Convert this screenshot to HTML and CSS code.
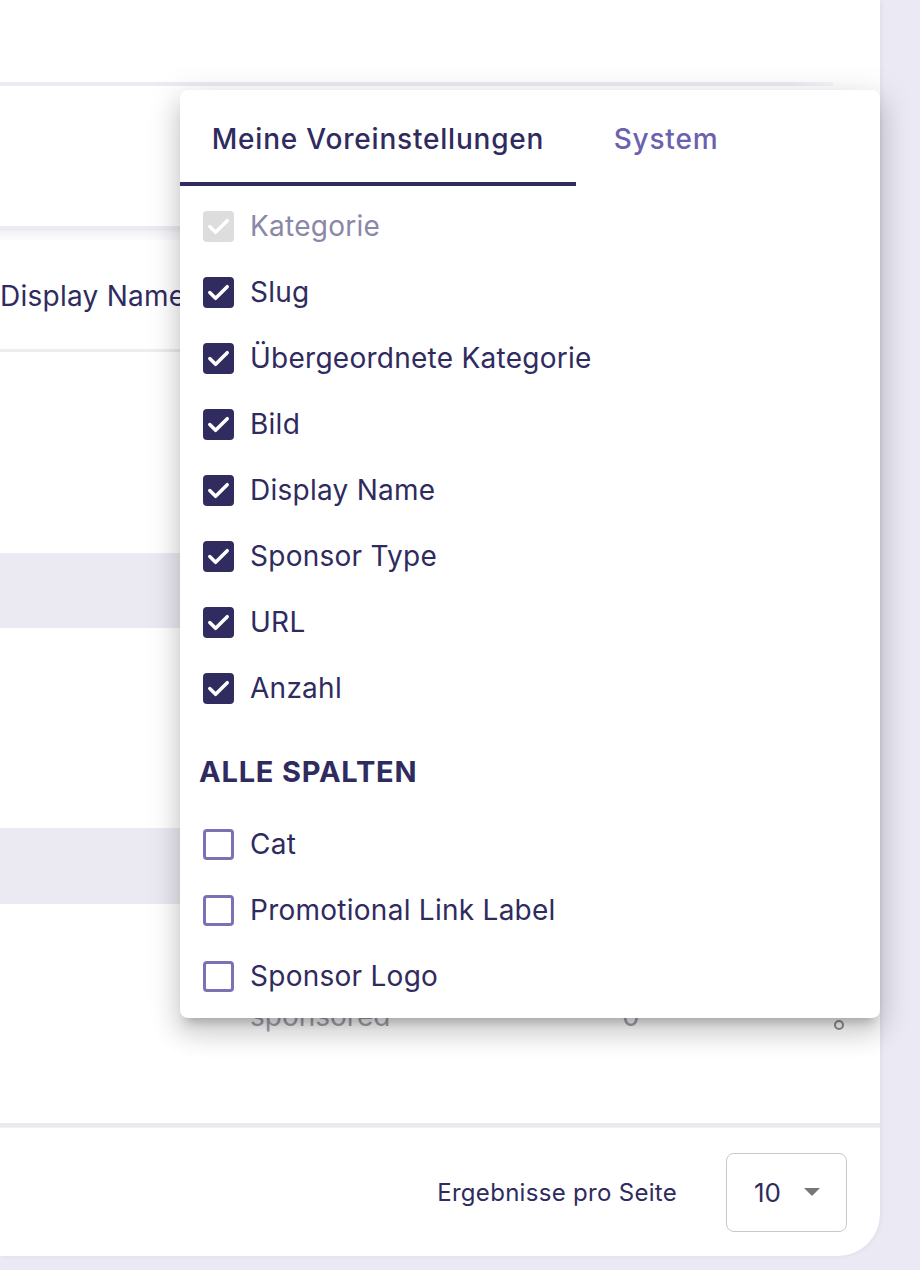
FILE: index.html
```html
<!DOCTYPE html>
<html lang="de">
<head>
<meta charset="utf-8">
<title>Spalten</title>
<link rel="stylesheet" href="styles.css">
</head>
<body>
<div class="card">
  <div class="toolbar"></div>
  <div class="toolbar-line"></div>
  <div class="filters"></div>
  <div class="table">
    <div class="thead-top"></div>
    <div class="thead"><span class="th">Display Name</span></div>
    <div class="row row-tall"></div>
    <div class="row row-short stripe"></div>
    <div class="row row-tall2"></div>
    <div class="row row-short2 stripe"></div>
    <div class="row row-last">
      <span class="cell-sponsored">sponsored</span>
      <span class="cell-count">0</span>
      <span class="cell-icon"></span>
    </div>
  </div>
  <div class="table-sep"></div>
  <div class="footer">
    <span class="per-page">Ergebnisse pro Seite</span>
    <div class="select">
      <span class="select-value">10</span>
      <span class="select-arrow"></span>
    </div>
  </div>

  <div class="menu">
    <div class="tabs">
      <div class="tab tab-active">Meine Voreinstellungen</div>
      <div class="tab tab-idle">System</div>
    </div>
    <ul class="list">
      <li class="item item-disabled"><span class="cb cb-disabled"><svg viewBox="0 0 32 32"><polyline points="7,16 13,22 25,10"/></svg></span>Kategorie</li>
      <li class="item"><span class="cb cb-on"><svg viewBox="0 0 32 32"><polyline points="7,16 13,22 25,10"/></svg></span>Slug</li>
      <li class="item"><span class="cb cb-on"><svg viewBox="0 0 32 32"><polyline points="7,16 13,22 25,10"/></svg></span>Übergeordnete Kategorie</li>
      <li class="item"><span class="cb cb-on"><svg viewBox="0 0 32 32"><polyline points="7,16 13,22 25,10"/></svg></span>Bild</li>
      <li class="item"><span class="cb cb-on"><svg viewBox="0 0 32 32"><polyline points="7,16 13,22 25,10"/></svg></span>Display Name</li>
      <li class="item"><span class="cb cb-on"><svg viewBox="0 0 32 32"><polyline points="7,16 13,22 25,10"/></svg></span>Sponsor Type</li>
      <li class="item"><span class="cb cb-on"><svg viewBox="0 0 32 32"><polyline points="7,16 13,22 25,10"/></svg></span>URL</li>
      <li class="item"><span class="cb cb-on"><svg viewBox="0 0 32 32"><polyline points="7,16 13,22 25,10"/></svg></span>Anzahl</li>
    </ul>
    <div class="heading">ALLE SPALTEN</div>
    <ul class="list list-all">
      <li class="item"><span class="cb cb-off"></span>Cat</li>
      <li class="item"><span class="cb cb-off"></span>Promotional Link Label</li>
      <li class="item"><span class="cb cb-off"></span>Sponsor Logo</li>
    </ul>
  </div>
</div>
</body>
</html>
```
FILE: styles.css
```css
* { box-sizing: border-box; }
html, body {
  margin: 0;
  padding: 0;
}
body {
  width: 920px;
  height: 1270px;
  overflow: hidden;
  background: #ebeaf4;
  font-family: Inter, "Noto Sans", sans-serif;
  color: #2f2b5e;
}
.card {
  position: relative;
  width: 880px;
  height: 1256px;
  background: #ffffff;
  border-bottom-right-radius: 42px;
  box-shadow: 1px 0 4px rgba(60, 60, 90, 0.08);
  display: flex;
  flex-direction: column;
}
.toolbar { height: 82px; }
.toolbar-line {
  height: 4px;
  width: 833px;
  background: linear-gradient(to right, #ebebf3 95%, #f6f6fa);
}
.filters { height: 140px; }
.table { display: flex; flex-direction: column; }
.thead-top {
  height: 14px;
  background: linear-gradient(to bottom, #ebebf3 0, #ebebf3 4px, #f4f4f8 6px, #fbfbfd 14px);
}
.thead {
  height: 112px;
  border-bottom: 3px solid #ececf1;
  display: flex;
  align-items: center;
  padding-top: 2px;
}
.th {
  font-size: 28px;
  letter-spacing: 0.26px;
  white-space: nowrap;
  color: #2f2b5e;
}
.row { position: relative; }
.row-tall { height: 201px; }
.row-short { height: 75px; }
.row-tall2 { height: 200px; }
.row-short2 { height: 76px; }
.stripe { background: #ebeaf3; }
.row-last { height: 219px; }
.cell-sponsored {
  position: absolute;
  left: 250px;
  top: 95px;
  font-size: 28px;
  color: #a3a2ad;
}
.cell-count {
  position: absolute;
  left: 622px;
  top: 95px;
  font-size: 28px;
  color: #a3a2ad;
}
.cell-icon {
  position: absolute;
  left: 834px;
  top: 116px;
  width: 10px;
  height: 10px;
  border: 2.5px solid #8d8d94;
  border-radius: 50%;
}
.table-sep {
  height: 5px;
  background: #e9e9ee;
  border-bottom: 1px solid #f1f1f4;
}
.footer {
  flex: 1;
  display: flex;
  justify-content: flex-end;
  align-items: center;
  padding-right: 33px;
  gap: 49px;
}
.per-page {
  font-size: 24px;
  letter-spacing: 0.3px;
  color: #2f2b5e;
}
.select {
  width: 121px;
  height: 79px;
  border: 1.5px solid #c8c8cc;
  border-radius: 8px;
  display: flex;
  align-items: center;
  padding-left: 27px;
}
.select-value {
  font-size: 26px;
  color: #2f2b5e;
}
.select-arrow {
  margin-left: 23px;
  width: 0;
  height: 0;
  border-left: 8px solid transparent;
  border-right: 8px solid transparent;
  border-top: 8px solid #777777;
}

/* dropdown menu */
.menu {
  position: absolute;
  left: 180px;
  top: 90px;
  width: 700px;
  height: 928px;
  background: #ffffff;
  border-radius: 8px;
  box-shadow: 0 10px 10px -6px rgba(0,0,0,0.2), 0 16px 24px 2px rgba(0,0,0,0.12), 0 6px 32px 5px rgba(0,0,0,0.1);
  display: flex;
  flex-direction: column;
}
.tabs { display: flex; height: 96px; }
.tab {
  height: 96px;
  font-size: 28px;
  letter-spacing: 0.8px;
  font-weight: 500;
  display: flex;
  align-items: center;
  justify-content: center;
  padding-top: 6px;
  white-space: nowrap;
}
.tab-active {
  width: 396px;
  color: #2f2b5e;
  border-bottom: 4px solid #302c60;
}
.tab-idle {
  width: 180px;
  color: #6b61ae;
  padding-bottom: 4px;
}
.list {
  list-style: none;
  margin: 0;
  padding: 7px 0 0 23px;
}
.list-all { padding-top: 0; }
.item {
  height: 66px;
  display: flex;
  align-items: center;
  gap: 16px;
  font-size: 28px;
  letter-spacing: 0.26px;
  color: #2f2b5e;
  white-space: nowrap;
}
.item-disabled { color: #8a88a6; }
.cb {
  width: 31px;
  height: 31px;
  border-radius: 4px;
  flex: none;
  display: flex;
}
.cb svg { width: 31px; height: 31px; }
.cb polyline {
  fill: none;
  stroke: #ffffff;
  stroke-width: 3.6;
  stroke-linecap: round;
  stroke-linejoin: round;
}
.cb-on { background: #302c60; }
.cb-disabled { background: #dddddd; }
.cb-off {
  border: 3px solid #7b71b5;
  border-radius: 4px;
}
.heading {
  margin: 34px 0 22px 19px;
  height: 34px;
  line-height: 34px;
  font-size: 29px;
  letter-spacing: 0.8px;
  font-weight: 700;
  color: #2f2b5e;
}
```
